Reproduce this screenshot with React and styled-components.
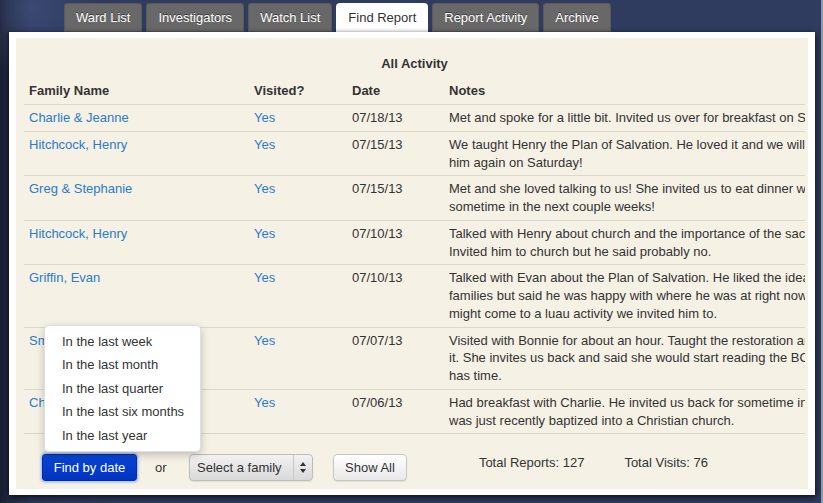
import React from "react";
import styled, { createGlobalStyle } from "styled-components";

const GlobalStyle = createGlobalStyle`
  html, body { margin: 0; padding: 0; }
  body {
    background: #2e3a5c;
    font-family: "Liberation Sans", Arial, Helvetica, sans-serif;
    font-size: 13px;
    color: #333;
  }
`;

const Frame = styled.div`
  width: 823px;
  height: 503px;
  box-sizing: border-box;
  padding: 3px 6px 0 9px;
  border-right: 2px solid #8f97aa;
  display: flex;
  flex-direction: column;
  background:
    radial-gradient(circle at 30px 8px, rgba(90, 110, 170, 0.35), rgba(90, 110, 170, 0) 70px),
    linear-gradient(90deg, #181d30 0px, #20283f 7px, #2a3556 30px, #2f3c5f 120px, #2f3c5f 100%);
  overflow: hidden;
`;

const TabBar = styled.div`
  display: flex;
  flex: none;
  gap: 4px;
  padding-left: 55px;
  height: 29px;
`;

const Tab = styled.div`
  display: flex;
  align-items: center;
  padding: 0 12px;
  border-radius: 4px 4px 0 0;
  font-size: 13px;
  white-space: nowrap;
  background: ${(p) => (p.$active ? "#ffffff" : "#686868")};
  color: ${(p) => (p.$active ? "#333" : "#fff")};
  text-shadow: ${(p) => (p.$active ? "none" : "0 -1px 0 rgba(0,0,0,0.45)")};
  box-shadow: ${(p) => (p.$active ? "none" : "inset 0 0 0 1px #5a5a5a")};
`;

const Panel = styled.div`
  flex: none;
  height: 463px;
  box-sizing: border-box;
  background: #fff;
  padding: 6px 7px;
  display: flex;
  box-shadow: 2px 3px 6px rgba(0, 0, 0, 0.55), -2px 0 4px rgba(0, 0, 0, 0.35);
`;

const Cream = styled.div`
  flex: 1;
  background: #f6f1e5;
  padding: 17px 3px 0 8px;
  display: flex;
  flex-direction: column;
  min-width: 0;
`;

const Clip = styled.div`
  overflow: hidden;
`;

const Title = styled.div`
  text-align: center;
  font-weight: bold;
  line-height: 18px;
  margin-bottom: 5px;
`;

const Table = styled.table`
  border-collapse: collapse;
  table-layout: fixed;
  width: 900px;
`;

const Th = styled.th`
  text-align: left;
  font-weight: bold;
  padding: 4px 5px;
  line-height: 18px;
  border-bottom: 1px solid #dcd8ce;
  width: ${(p) => p.$w || "auto"};
`;

const Td = styled.td`
  padding: 4px 5px;
  line-height: 17.75px;
  vertical-align: top;
  border-bottom: 1px solid #dcd8ce;
`;

const Link = styled.span`
  color: #2a7bc8;
`;

const Line = styled.span`
  display: block;
  white-space: nowrap;
`;

const Controls = styled.div`
  display: flex;
  align-items: flex-start;
  margin-top: 20px;
  padding-left: 18px;
`;

const DropWrap = styled.div`
  position: relative;
`;

const PrimaryButton = styled.div`
  height: 27px;
  width: 95px;
  box-sizing: border-box;
  display: flex;
  align-items: center;
  justify-content: center;
  white-space: nowrap;
  color: #fff;
  background: linear-gradient(#0a45d6, #0033c0);
  border: 1px solid #0a2e96;
  border-radius: 3px;
  box-shadow: 0 0 3px 1px rgba(90, 150, 255, 0.75);
`;

const Menu = styled.div`
  position: absolute;
  left: 2px;
  bottom: calc(100% + 2px);
  width: 157px;
  box-sizing: border-box;
  padding: 4px 0;
  background: #fff;
  border: 1px solid rgba(0, 0, 0, 0.12);
  border-radius: 5px;
  box-shadow: 0 3px 9px rgba(0, 0, 0, 0.22);
`;

const MenuItem = styled.div`
  padding: 0 17px;
  line-height: 23.5px;
  white-space: nowrap;
  color: #333;
`;

const Or = styled.div`
  width: 52px;
  box-sizing: border-box;
  padding-left: 18px;
  line-height: 27px;
`;

const Select = styled.div`
  width: 124px;
  height: 27px;
  box-sizing: border-box;
  display: flex;
  align-items: center;
  justify-content: space-between;
  padding: 0 6px 0 7px;
  white-space: nowrap;
  background: linear-gradient(#f2f2f2, #d9d9d9);
  border: 1px solid #bdbdbd;
  border-radius: 4px;
  box-shadow: 0 1px 1px rgba(0, 0, 0, 0.08);
`;

const Divider = styled.div`
  display: flex;
  align-items: center;
  height: 100%;
  padding-left: 6px;
  border-left: 1px solid #c9c9c9;
`;

const Button = styled.div`
  margin-left: 20px;
  height: 27px;
  box-sizing: border-box;
  display: flex;
  align-items: center;
  padding: 0 11px;
  white-space: nowrap;
  background: linear-gradient(#ffffff, #e8e8e8);
  border: 1px solid #c6c6c6;
  border-radius: 4px;
  box-shadow: 0 1px 1px rgba(0, 0, 0, 0.08);
`;

const Stat = styled.div`
  line-height: 18px;
  white-space: nowrap;
  margin-left: ${(p) => p.$ml}px;
`;

const rows = [
  { name: "Charlie & Jeanne", date: "07/18/13", notes: ["Met and spoke for a little bit. Invited us over for breakfast on Saturday."] },
  { name: "Hitchcock, Henry", date: "07/15/13", notes: ["We taught Henry the Plan of Salvation. He loved it and we will see", "him again on Saturday!"] },
  { name: "Greg & Stephanie", date: "07/15/13", notes: ["Met and she loved talking to us! She invited us to eat dinner with them", "sometime in the next couple weeks!"] },
  { name: "Hitchcock, Henry", date: "07/10/13", notes: ["Talked with Henry about church and the importance of the sacrament.", "Invited him to church but he said probably no."] },
  { name: "Griffin, Evan", date: "07/10/13", notes: ["Talked with Evan about the Plan of Salvation. He liked the idea of eternal", "families but said he was happy with where he was at right now. He said he", "might come to a luau activity we invited him to."] },
  { name: "Smith, Bonnie", date: "07/07/13", notes: ["Visited with Bonnie for about an hour. Taught the restoration and she loved", "it. She invites us back and said she would start reading the BOM when she", "has time."] },
  { name: "Charlie & Jeanne", date: "07/06/13", notes: ["Had breakfast with Charlie. He invited us back for sometime in August. He", "was just recently baptized into a Christian church."] },
];

const tabs = ["Ward List", "Investigators", "Watch List", "Find Report", "Report Activity", "Archive"];
const options = ["In the last week", "In the last month", "In the last quarter", "In the last six months", "In the last year"];

export default function App() {
  return (
    <>
      <GlobalStyle />
      <Frame>
        <TabBar>
          {tabs.map((t) => (
            <Tab key={t} $active={t === "Find Report"}>{t}</Tab>
          ))}
        </TabBar>
        <Panel>
          <Cream>
            <Clip>
              <Title>All Activity</Title>
              <Table>
                <thead>
                  <tr>
                    <Th $w="215px">Family Name</Th>
                    <Th $w="88px">Visited?</Th>
                    <Th $w="87px">Date</Th>
                    <Th>Notes</Th>
                  </tr>
                </thead>
                <tbody>
                  {rows.map((r, i) => (
                    <tr key={i}>
                      <Td><Link>{r.name}</Link></Td>
                      <Td><Link>Yes</Link></Td>
                      <Td>{r.date}</Td>
                      <Td>{r.notes.map((n, j) => <Line key={j}>{n}</Line>)}</Td>
                    </tr>
                  ))}
                </tbody>
              </Table>
            </Clip>
            <Controls>
              <DropWrap>
                <PrimaryButton>Find by date</PrimaryButton>
                <Menu>
                  {options.map((o) => <MenuItem key={o}>{o}</MenuItem>)}
                </Menu>
              </DropWrap>
              <Or>or</Or>
              <Select>
                <span>Select a family</span>
                <Divider>
                  <svg width="6" height="11" viewBox="0 0 6 11">
                    <path d="M3 0 L6 4 L0 4 Z" fill="#333" />
                    <path d="M3 11 L6 7 L0 7 Z" fill="#333" />
                  </svg>
                </Divider>
              </Select>
              <Button>Show All</Button>
              <Stat $ml={72}>Total Reports: 127</Stat>
              <Stat $ml={40}>Total Visits: 76</Stat>
            </Controls>
          </Cream>
        </Panel>
      </Frame>
    </>
  );
}
